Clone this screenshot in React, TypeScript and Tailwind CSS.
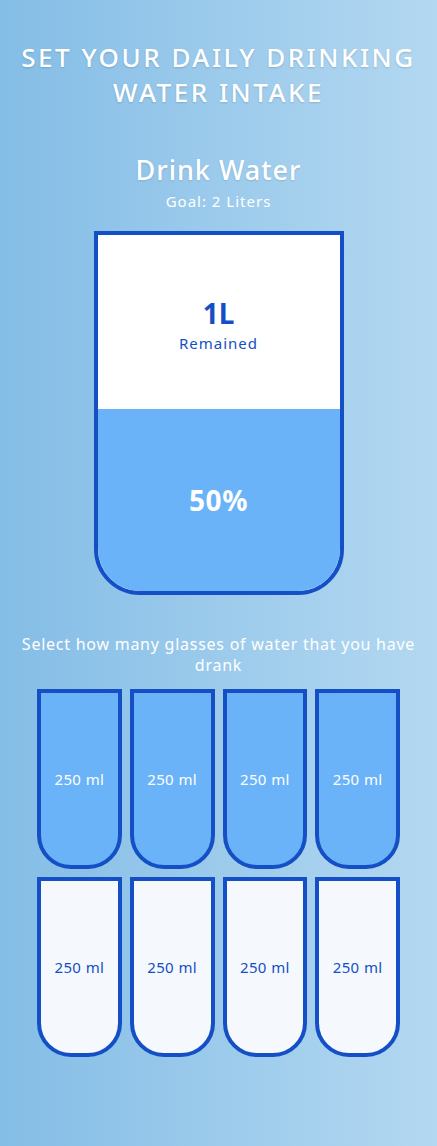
import React from "react";

const font = { fontFamily: '"Noto Sans", "DejaVu Sans", sans-serif' };

function SmallCup({ full }: { full: boolean }) {
  return (
    <div
      className={
        "h-[180px] w-full border-4 border-[#144fc6] rounded-b-[34px] flex items-center justify-center text-[15px] tracking-[0.4px] " +
        (full ? "bg-[#6ab3f8] text-white" : "bg-[#f5f9fd] text-[#144fc6]")
      }
    >
      250 ml
    </div>
  );
}

export default function App() {
  const cups = [true, true, true, true, false, false, false, false];
  return (
    <div
      className="min-h-screen w-full bg-gradient-to-r from-[#84bde6] to-[#b3d8f1] flex flex-col items-center text-white pb-[89px]"
      style={font}
    >
      <h1
        className="mt-[40px] text-[26px] leading-[35px] uppercase tracking-[2.5px] text-center font-medium"
        style={{ textShadow: "0 1px 2px rgba(0,0,0,0.15)" }}
      >
        Set your daily drinking
        <br />
        water intake
      </h1>
      <h2
        className="mt-[44px] text-[27px] leading-[32px] font-medium tracking-[1px]"
        style={{ textShadow: "0 1px 2px rgba(0,0,0,0.12)" }}
      >
        Drink Water
      </h2>
      <h3 className="mt-[5px] text-[15px] leading-[20px] tracking-[1px]">Goal: 2 Liters</h3>

      <div className="mt-[20px] w-[250px] h-[364px] border-4 border-[#144fc6] rounded-b-[46px] bg-white overflow-hidden flex flex-col">
        <div className="flex-1 flex flex-col items-center justify-center text-[#144fc6] pt-[6px]">
          <span className="text-[28px] leading-[32px] font-bold">1L</span>
          <span className="mt-[3px] text-[15px] leading-[22px] tracking-[1px]">Remained</span>
        </div>
        <div className="h-[182px] bg-[#6ab3f8] flex items-center justify-center text-[28px] font-bold tracking-[0.5px]">
          50%
        </div>
      </div>

      <p className="mt-[39px] text-[16px] leading-[21px] text-center px-[18px] tracking-[0.75px]">
        Select how many glasses of water that you have drank
      </p>

      <div className="mt-[13px] w-[363px] grid grid-cols-4 gap-[8px]">
        {cups.map((f, i) => (
          <SmallCup key={i} full={f} />
        ))}
      </div>
    </div>
  );
}
